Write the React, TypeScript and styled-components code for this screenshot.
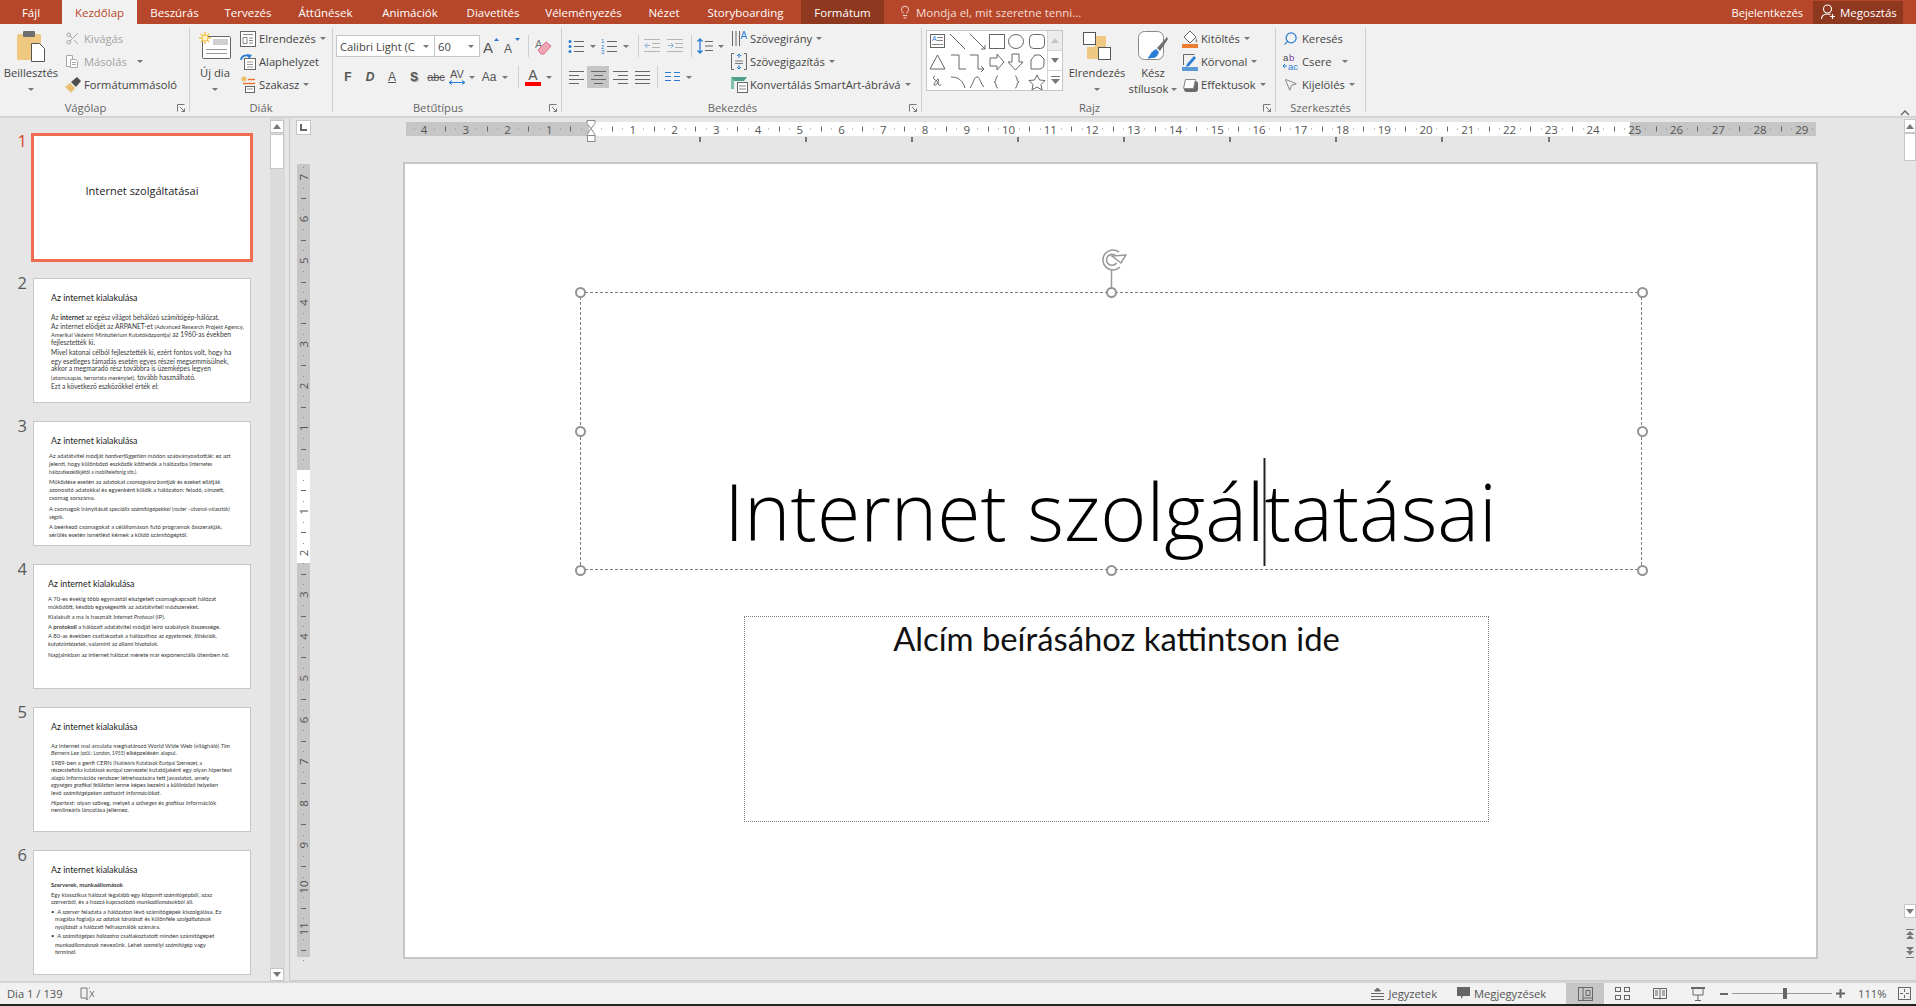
import React from "react";
import styled, { createGlobalStyle } from "styled-components";
import { Lightbulb, Scissors, Search, MousePointer2 } from "lucide-react";

const UI = `"Open Sans", "Noto Sans", sans-serif`;
const SLIDE = `Lato, "Open Sans", sans-serif`;

const Global = createGlobalStyle`
  html, body { margin: 0; padding: 0; background: #e6e6e6; }
  * { box-sizing: border-box; }
`;

const Page = styled.div`
  width: 1916px;
  height: 1006px;
  overflow: hidden;
  display: flex;
  flex-direction: column;
  font-family: ${UI};
  font-size: 11.2px;
  color: #444;
  background: #e6e6e6;
`;

/* ---- title tabs ---- */
const TabBar = styled.div`
  height: 24px;
  flex: none;
  display: flex;
  background: #b7472a;
  color: #fff;
  font-size: 11.5px;
`;
const Tab = styled.div<{ $w: number; $active?: boolean; $dark?: boolean }>`
  width: ${(p) => p.$w}px;
  display: flex;
  align-items: center;
  justify-content: center;
  white-space: nowrap;
  background: ${(p) => (p.$active ? "#f1f1f1" : p.$dark ? "#8f3820" : "transparent")};
  color: ${(p) => (p.$active ? "#b7472a" : "#fff")};
`;
const TabGap = styled.div`
  width: 4px;
`;
const TellMe = styled.div`
  display: flex;
  align-items: center;
  gap: 4px;
  margin-left: 14px;
  color: #f5ddd6;
`;
const TabRight = styled.div`
  margin-left: auto;
  display: flex;
  align-items: center;
  margin-right: 13px;
  font-size: 11.2px;
`;
const Share = styled.div`
  width: 90px;
  height: 23px;
  margin-left: 10px;
  background: #8f3820;
  display: flex;
  align-items: center;
  gap: 4px;
  padding-left: 8px;
  white-space: nowrap;
  font-size: 11.5px;
`;

/* ---- ribbon ---- */
const Ribbon = styled.div`
  height: 94px;
  flex: none;
  display: flex;
  background: #f1f1f1;
  border-bottom: 2px solid #d4d4d4;
`;
const Group = styled.div<{ $w: number }>`
  width: ${(p) => p.$w}px;
  height: 84px;
  margin-top: 4px;
  flex: none;
  display: flex;
  flex-direction: column;
  border-right: 1px solid #cfcfcf;
`;
const GroupBody = styled.div<{ $pl?: number }>`
  height: 70px;
  margin-top: -1px;
  display: flex;
  padding-left: ${(p) => p.$pl ?? 0}px;
`;
const GroupFoot = styled.div<{ $dlg?: boolean }>`
  height: 15px;
  line-height: 22px;
  position: relative;
  text-align: center;
  color: #666;
  padding-right: ${(p) => (p.$dlg ? 18 : 0)}px;
`;
const Expander = styled.svg`
  position: absolute;
  right: 3px;
  top: 7px;
`;
const Collapse = styled.svg`
  margin-left: auto;
  margin-right: 6px;
  margin-top: 86px;
`;
const Big = styled.div<{ $w: number; $ml?: number }>`
  width: ${(p) => p.$w}px;
  margin-left: ${(p) => p.$ml ?? 0}px;
  flex: none;
  display: flex;
  flex-direction: column;
  align-items: center;
  line-height: 16px;
  white-space: nowrap;
`;
const BigIcon = styled.div`
  height: 39px;
  display: flex;
  align-items: center;
  justify-content: center;
`;
const BigLabel = styled.div`
  height: 16px;
  display: flex;
  align-items: center;
  gap: 3px;
`;
const Stack = styled.div<{ $ml?: number }>`
  display: flex;
  flex-direction: column;
  margin-left: ${(p) => p.$ml ?? 0}px;
  flex: none;
`;
const Item = styled.div<{ $off?: boolean }>`
  height: 23px;
  display: flex;
  align-items: center;
  white-space: nowrap;
  color: ${(p) => (p.$off ? "#a3a3a3" : "#444")};
`;
const ItemIcon = styled.span`
  width: 19px;
  height: 18px;
  flex: none;
  display: flex;
  align-items: center;
`;
const Drop = styled.span<{ $m?: number }>`
  display: inline-block;
  width: 0;
  height: 0;
  margin-left: ${(p) => p.$m ?? 4}px;
  border-left: 3px solid transparent;
  border-right: 3px solid transparent;
  border-top: 3px solid #777;
`;
const ToolRows = styled.div`
  display: flex;
  flex-direction: column;
  gap: 9px;
  padding-top: 8px;
  flex: none;
`;
const ToolRow = styled.div`
  height: 22px;
  display: flex;
`;
const Cell = styled.div<{ $w: number; $on?: boolean }>`
  width: ${(p) => p.$w}px;
  height: 22px;
  flex: none;
  display: flex;
  align-items: center;
  justify-content: center;
  background: ${(p) => (p.$on ? "#c6c6c6" : "transparent")};
`;
const Rule = styled.div`
  width: 1px;
  height: 22px;
  background: #cfcfcf;
`;
const Combo = styled.div<{ $w: number }>`
  width: ${(p) => p.$w}px;
  height: 22px;
  flex: none;
  background: #fff;
  border: 1px solid #c6c6c6;
  margin-left: -1px;
  display: flex;
  align-items: center;
  justify-content: space-between;
  padding: 0 5px 0 3px;
  white-space: nowrap;
  overflow: hidden;
`;
const Glyph = styled.span<{ $b?: boolean; $i?: boolean; $u?: boolean; $s?: boolean; $size?: number; $shadow?: boolean }>`
  font-family: "Liberation Sans", sans-serif;
  font-size: ${(p) => p.$size ?? 12}px;
  line-height: ${(p) => p.$size ?? 12}px;
  font-weight: ${(p) => (p.$b ? 700 : 400)};
  font-style: ${(p) => (p.$i ? "italic" : "normal")};
  text-decoration: ${(p) => (p.$u ? "underline" : p.$s ? "line-through" : "none")};
  text-shadow: ${(p) => (p.$shadow ? "1px 1px 1px #999" : "none")};
  color: #555;
`;
const GlyphStack = styled.span`
  display: flex;
  flex-direction: column;
  align-items: center;
`;
const Gallery = styled.div`
  width: 137px;
  height: 61px;
  margin-top: 3px;
  flex: none;
  background: #fff;
  border: 1px solid #c6c6c6;
  display: flex;
`;
const GalleryScroll = styled.div`
  margin-left: auto;
  width: 15px;
  display: flex;
  flex-direction: column;
  border-left: 1px solid #d6d6d6;
`;
const ScrollCell = styled.div<{ $off?: boolean }>`
  flex: 1;
  display: flex;
  align-items: center;
  justify-content: center;
  background: ${(p) => (p.$off ? "#ececec" : "#fff")};
  border-bottom: 1px solid #d6d6d6;
  &:last-child { border-bottom: 0; }
`;

/* ---- workspace ---- */
const Workspace = styled.div`
  height: 863px;
  flex: none;
  display: flex;
`;
const ThumbPanel = styled.div`
  width: 270px;
  flex: none;
  padding-top: 17px;
  overflow: hidden;
`;
const ThumbRow = styled.div`
  height: 143px;
  display: flex;
`;
const ThumbNum = styled.div<{ $on?: boolean }>`
  width: 33px;
  height: 16px;
  margin-top: ${(p) => (p.$on ? -2 : -3)}px;
  flex: none;
  padding-right: 6px;
  text-align: right;
  font-size: 16.5px;
  line-height: 16px;
  color: ${(p) => (p.$on ? "#d24726" : "#5a5a5a")};
`;
const Thumb = styled.div<{ $on?: boolean; $pl?: number; $fs?: number }>`
  width: 218px;
  height: 125px;
  background: #fff;
  border: 1px solid ${(p) => (p.$on ? "#ef6c4f" : "#c6c6c6")};
  box-shadow: ${(p) => (p.$on ? "0 0 0 2px #ef6c4f" : "none")};
  font-family: ${SLIDE};
  font-size: ${(p) => p.$fs ?? 12}px;
  color: #3a3a3a;
  padding-left: ${(p) => p.$pl ?? 17}px;
  overflow: hidden;
`;
const ThumbCover = styled(Thumb)`
  display: flex;
  align-items: center;
  justify-content: center;
  padding: 0 0 14px;
  font-family: ${UI};
  font-size: 11px;
  color: #222;
  transform-origin: center;
`;
const ThumbTitle = styled.div<{ $pl?: number; $mb: number }>`
  margin-top: 13px;
  margin-bottom: ${(p) => p.$mb}px;
  padding-left: ${(p) => p.$pl ?? 0}px;
  height: 12px;
  line-height: 12px;
  font-size: 8.8px;
  color: #222;
  white-space: nowrap;
`;
const Line = styled.div<{ $h: number; $in?: number }>`
  height: ${(p) => p.$h}px;
  line-height: 8px;
  margin-left: ${(p) => p.$in ?? 0}px;
  white-space: nowrap;
`;
const Tiny = styled.span`
  font-size: 0.84em;
`;
const VBar = styled.div`
  width: 15px;
  flex: none;
  background: #dbdbdb;
  display: flex;
  flex-direction: column;
  padding-top: 2px;
`;
const VBtn = styled.div`
  width: 14px;
  height: 13px;
  flex: none;
  background: #fff;
  border: 1px solid #c6c6c6;
  display: flex;
  align-items: center;
  justify-content: center;
`;
const VThumb = styled.div<{ $h: number }>`
  width: 14px;
  height: ${(p) => p.$h}px;
  flex: none;
  margin-top: 1px;
  background: #fff;
  border: 1px solid #c6c6c6;
`;
const VSpace = styled.div`
  flex: 1;
`;
const Editor = styled.div`
  margin-left: 4px;
  flex: 1;
  min-width: 0;
  height: 863px;
  border-left: 1px solid #cbcbcb;
  border-bottom: 1px solid #cbcbcb;
  display: flex;
`;
const EditorMain = styled.div`
  flex: 1;
  min-width: 0;
  display: flex;
  flex-direction: column;
`;
const RulerTop = styled.div`
  height: 44px;
  flex: none;
  display: flex;
  padding: 2px 0 0 6px;
`;
const TabStopBtn = styled.div`
  width: 15px;
  height: 15px;
  flex: none;
  background: #fff;
  border: 1px solid #c6c6c6;
  display: flex;
  align-items: center;
  justify-content: center;
`;
const HRuler = styled.svg`
  margin-left: 95px;
  flex: none;
`;
const EditorBody = styled.div`
  display: flex;
  padding-left: 7px;
`;
const VRuler = styled.svg`
  margin-top: 2px;
  flex: none;
  overflow: visible;
`;
const Canvas = styled.div`
  position: relative;
  width: 1415px;
  height: 797px;
  margin-left: 93px;
  flex: none;
  background: #fff;
  border: 2px solid #c6c6c6;
`;
const dash = (on: number, off: number) => {
  const c = `#7d7d7d 0 ${on}px, transparent ${on}px ${on + off}px`;
  return `
    background-image:
      repeating-linear-gradient(90deg, ${c}),
      repeating-linear-gradient(90deg, ${c}),
      repeating-linear-gradient(0deg, ${c}),
      repeating-linear-gradient(0deg, ${c});
    background-size: 100% 1px, 100% 1px, 1px 100%, 1px 100%;
    background-position: 0 0, 0 100%, 0 0, 100% 0;
    background-repeat: no-repeat;
  `;
};
const TitleBox = styled.div`
  position: absolute;
  left: 175px;
  top: 128px;
  width: 1062px;
  height: 278px;
  ${dash(3, 2)}
  display: flex;
  align-items: flex-end;
  justify-content: center;
  padding-bottom: 10px;
  font-family: ${UI};
  font-weight: 300;
  font-size: 80px;
  line-height: 100px;
  color: #000;
  white-space: nowrap;
`;
const TitleText = styled.span`
  display: inline-block;
  transform: scaleX(0.984);
`;
const TextCaret = styled.span`
  position: relative;
  display: inline-block;
  width: 0;
  height: 0;
  &::after {
    content: "";
    position: absolute;
    left: -1px;
    top: -83px;
    width: 2px;
    height: 108px;
    background: #222;
  }
`;
const Handle = styled.div<{ $x: number; $y: number }>`
  position: absolute;
  left: calc(${(p) => p.$x}% - 5.5px);
  top: calc(${(p) => p.$y}% - 5.5px);
  width: 11px;
  height: 11px;
  border-radius: 50%;
  background: #fff;
  border: 2px solid #939393;
`;
const RotateHandle = styled.svg`
  position: absolute;
  left: 519px;
  top: -44px;
`;
const SubBox = styled.div`
  position: absolute;
  left: 339px;
  top: 452px;
  width: 745px;
  height: 206px;
  ${dash(1, 1)}
  padding-top: 2px;
  text-align: center;
  font-family: ${SLIDE};
  font-size: 32.8px;
  line-height: 42px;
  color: #111;
`;
const RightBar = styled.div`
  width: 12px;
  flex: none;
  display: flex;
  flex-direction: column;
  align-items: center;
  padding-top: 1px;
`;
const RBtn = styled(VBtn)`
  width: 12px;
  height: 14px;
`;
const RThumb = styled(VThumb)`
  width: 12px;
  margin-top: 0;
`;
const RNav = styled.div<{ $mt?: number; $mb?: number }>`
  height: 18px;
  flex: none;
  display: flex;
  align-items: center;
  margin-top: ${(p) => p.$mt ?? 0}px;
  margin-bottom: ${(p) => p.$mb ?? 0}px;
`;

/* ---- status ---- */
const Status = styled.div`
  height: 23px;
  flex: none;
  display: flex;
  align-items: center;
  background: #f1f1f1;
  border-top: 2px solid #d4d4d4;
  color: #555;
`;
const StatusText = styled.div`
  padding-left: 7px;
  width: 80px;
  white-space: nowrap;
`;
const StatusRight = styled.div`
  margin-left: auto;
  display: flex;
  align-items: center;
  height: 100%;
`;
const StatusBtn = styled.div`
  display: flex;
  align-items: center;
  gap: 4px;
  margin-right: 20px;
  white-space: nowrap;
`;
const ViewBtn = styled.div<{ $on?: boolean }>`
  width: 37.7px;
  height: 100%;
  display: flex;
  align-items: center;
  justify-content: center;
  background: ${(p) => (p.$on ? "#c6c6c6" : "transparent")};
`;
const ZoomMinus = styled.svg`
  margin-left: 3px;
`;
const Slider = styled.div`
  position: relative;
  width: 100px;
  height: 1px;
  background: #9a9a9a;
  margin: 0 4px;
`;
const SliderKnob = styled.div`
  position: absolute;
  left: 51px;
  top: -5px;
  width: 4px;
  height: 11px;
  background: #666;
`;
const ZoomText = styled.div`
  width: 26px;
  margin-left: 13px;
  margin-right: 14px;
`;
const FitIcon = styled.svg`
  margin-right: 5px;
`;
const EndLine = styled.div`
  height: 2px;
  flex: none;
  background: #222;
`;

/* ---- icons ---- */
const BLUE = "#2b7cd3";

function Corner() {
  return (
    <Expander width="9" height="9" viewBox="0 0 9 9" fill="none" stroke="#777">
      <path d="M.5 7.5v-7h7" />
      <path d="M3 3l4.5 4.5M7.5 4.5v3h-3" />
    </Expander>
  );
}
function PasteIcon() {
  return (
    <svg width="29" height="31" viewBox="0 0 29 31">
      <rect x="0" y="3" width="24" height="26" rx="1.500" fill="#efc982" />
      <rect x="6" y="0" width="12" height="6" rx="1" fill="#6f6f6f" />
      <path d="M14.500 12.500h8l5 5v13h-13z" fill="#fff" stroke="#555" />
    </svg>
  );
}
function CopyIcon() {
  return (
    <svg width="15" height="15" viewBox="0 0 15 15" fill="#fff" stroke="#a8a8a8">
      <path d="M1.500 1.500h6v11h-6z" />
      <path d="M5.500 5.500h5l2 2v6h-7z" />
      <path d="M7 8.500h4M7 10.500h4" />
    </svg>
  );
}
function BrushIcon() {
  return (
    <svg width="16" height="16" viewBox="0 0 16 16">
      <path d="M0 10l5-4 5 5-4 5c-1-2-4-4-6-6z" fill="#e9bf72" />
      <path d="M6 5l6-5 4 4-5 6z" fill="#4f4f4f" />
    </svg>
  );
}
function NewSlideIcon() {
  return (
    <svg width="32" height="28" viewBox="0 0 32 28">
      <rect x="3.500" y="4.500" width="28" height="22" rx="1" fill="#fff" stroke="#666" />
      <rect x="14" y="7" width="15" height="6" fill="#cfcfcf" />
      <path d="M7 17.500h21M7 21.500h21" stroke="#999" />
      <path d="M6 0v12M0 6h12M2 2l8 8M10 2l-8 8" stroke="#f2c14e" strokeWidth="1.500" />
      <circle cx="6" cy="6" r="3" fill="#fff3c4" stroke="#f2c14e" />
    </svg>
  );
}
function LayoutIcon() {
  return (
    <svg width="16" height="16" viewBox="0 0 16 16" fill="#fff" stroke="#666">
      <rect x=".5" y=".5" width="15" height="15" />
      <path d="M3 3.500h10M3 6.500h4v6H3zM9 7h4M9 9.500h4M9 12h4" fill="none" stroke="#888" />
    </svg>
  );
}
function ResetIcon() {
  return (
    <svg width="16" height="16" viewBox="0 0 16 16">
      <rect x="4.500" y="4.500" width="11" height="11" fill="#fff" stroke="#666" />
      <path d="M7 8h6M7 10.500h6M7 13h6" stroke="#999" />
      <path d="M1 6a5 5 0 0 1 8-3.500" fill="none" stroke={BLUE} strokeWidth="1.800" />
      <path d="M7 0l5 1-3 4z" fill={BLUE} />
    </svg>
  );
}
function SectionIcon() {
  return (
    <svg width="16" height="17" viewBox="0 0 16 17">
      <path d="M4 0v6M1 3h6M2 1l4 4M6 1L2 5" stroke="#f0b040" />
      <path d="M8 3.500h7" stroke="#e8702a" strokeWidth="1.400" />
      <path d="M3 7.500h12" stroke="#e8702a" strokeWidth="1.400" />
      <rect x="5.500" y="10.500" width="9" height="6" fill="#fff" stroke="#666" />
      <path d="M7 13h6" stroke="#999" />
    </svg>
  );
}
function GrowIcon({ up }: { up?: boolean }) {
  return (
    <svg width="17" height="18" viewBox="0 0 17 18">
      <text x="0" y="16" fontFamily="Liberation Sans" fontSize={up ? 15 : 12} fill="#555">A</text>
      <path d={up ? "M11 4l2.500-3L16 4z" : "M11 1l2.500 3L16 1z"} fill={BLUE} />
    </svg>
  );
}
function EraserIcon() {
  return (
    <svg width="18" height="18" viewBox="0 0 18 18">
      <text x="0" y="11" fontFamily="Liberation Sans" fontSize="11" fill="#777">A</text>
      <path d="M3 13l8-8 5 4-7 8H6z" fill="#f1a7b5" stroke="#d9708a" />
    </svg>
  );
}
function SpacingGlyph() {
  return (
    <GlyphStack>
      <Glyph $size={11}>AV</Glyph>
      <svg width="16" height="5" viewBox="0 0 16 5"><path d="M0 2.500h16M3 .5L0 2.500l3 2M13 .5l3 2-3 2" fill="none" stroke={BLUE} /></svg>
    </GlyphStack>
  );
}
function ColorA() {
  return (
    <GlyphStack>
      <Glyph $size={14}>A</Glyph>
      <svg width="16" height="4"><rect width="16" height="4" fill="#f00" /></svg>
    </GlyphStack>
  );
}
function BulletsIcon({ num }: { num?: boolean }) {
  return (
    <svg width="16" height="16" viewBox="0 0 16 16" stroke="#666">
      <path d="M6 3.500h10M6 8.500h10M6 13.500h10" />
      {num ? (
        <g fill={BLUE} stroke="none" fontSize="6" fontFamily="Liberation Sans">
          <text x="0" y="5">1</text><text x="0" y="10.500">2</text><text x="0" y="16">3</text>
        </g>
      ) : (
        <g fill={BLUE} stroke="none">
          <circle cx="2" cy="3.500" r="1.500" /><circle cx="2" cy="8.500" r="1.500" /><circle cx="2" cy="13.500" r="1.500" />
        </g>
      )}
    </svg>
  );
}
function IndentIcon({ more }: { more?: boolean }) {
  return (
    <svg width="16" height="14" viewBox="0 0 16 14" stroke="#b5b5b5">
      <path d="M0 .5h16M8 4.500h8M8 8.500h8M0 12.500h16" />
      <path d={more ? "M1 6.500h5M4 4l2.500 2.500L4 9" : "M6 6.500H1M3.500 4L1 6.500 3.500 9"} fill="none" stroke="#8db4dc" />
    </svg>
  );
}
function LineSpacingIcon() {
  return (
    <svg width="16" height="16" viewBox="0 0 16 16">
      <path d="M3 1v14M.5 3.500L3 1l2.500 2.500M.5 12.500L3 15l2.500-2.500" fill="none" stroke={BLUE} strokeWidth="1.300" />
      <path d="M8 3.500h8M8 8h8M8 12.500h8" stroke="#666" />
    </svg>
  );
}
function AlignIcon({ kind }: { kind: "l" | "c" | "r" | "j" }) {
  const s = kind === "l" ? ["M0 1.500h15", "M0 5.500h10", "M0 9.500h15", "M0 13.500h10"]
    : kind === "c" ? ["M0 1.500h15", "M3 5.500h9", "M0 9.500h15", "M3 13.500h9"]
    : kind === "r" ? ["M0 1.500h15", "M5 5.500h10", "M0 9.500h15", "M5 13.500h10"]
    : ["M0 1.500h15", "M0 5.500h15", "M0 9.500h15", "M0 13.500h15"];
  return (
    <svg width="15" height="15" viewBox="0 0 15 15" stroke="#666">
      {s.map((d) => <path key={d} d={d} />)}
    </svg>
  );
}
function ColumnsIcon() {
  return (
    <svg width="15" height="14" viewBox="0 0 15 14" stroke={BLUE}>
      <path d="M0 2.500h6M9 2.500h6M0 6.500h6M9 6.500h6M0 10.500h6M9 10.500h6" />
    </svg>
  );
}
function TextDirIcon() {
  return (
    <svg width="16" height="18" viewBox="0 0 16 18" stroke="#666">
      <path d="M1.500 1v15M5 1v15M8.500 1v15" />
      <text x="9.500" y="9" fontSize="10" fontFamily="Liberation Sans" fill={BLUE} stroke="none">A</text>
    </svg>
  );
}
function TextAlignIcon() {
  return (
    <svg width="16" height="17" viewBox="0 0 16 17" fill="none">
      <path d="M3 .5H.5v16H3M13 .5h2.500v16H13" stroke="#666" />
      <path d="M4 8h8M4 10.500h8" stroke="#777" />
      <path d="M8 1v4M6 3l2-2 2 2M8 12v4M6 14l2 2 2-2" stroke={BLUE} />
    </svg>
  );
}
function SmartArtIcon() {
  return (
    <svg width="17" height="17" viewBox="0 0 17 17">
      <path d="M0 1h16l-3 4H3z" fill="#4ea08a" />
      <path d="M0 1l3 4v8H0z" fill="#7cc0ad" />
      <rect x="6.500" y="6.500" width="10" height="10" fill="#fff" stroke="#666" />
      <path d="M8 10h7M8 13h7" stroke="#888" />
    </svg>
  );
}
function ArrangeIcon() {
  return (
    <svg width="28" height="28" viewBox="0 0 28 28">
      <rect x="12" y="4" width="11" height="12" fill="#efc982" />
      <rect x="4" y="15" width="12" height="12" fill="#efc982" />
      <rect x=".5" y=".5" width="12" height="12" fill="#fff" stroke="#555" />
      <rect x="15.500" y="15.500" width="12" height="12" fill="#fff" stroke="#555" />
    </svg>
  );
}
function StylesIcon() {
  return (
    <svg width="30" height="30" viewBox="0 0 30 30">
      <rect x=".5" y=".5" width="25" height="28" rx="6" fill="#fff" stroke="#8a8a8a" />
      <path d="M12 24c1-3 3-4 6-6l3 3c-1 3-3 6-6 6-2 0-4 0-5 1 0-2 1-3 2-4z" fill={BLUE} />
      <path d="M19 17l10-11 1 2-8 12z" fill="#6f6f6f" />
    </svg>
  );
}
function FillIcon() {
  return (
    <svg width="17" height="18" viewBox="0 0 17 18">
      <path d="M8 1l6 6-6 6-6-6z" fill="#fff" stroke="#666" />
      <path d="M14 8c1 2 2 3 1 4s-2 0-1-4" fill="#888" />
      <rect y="14" width="16" height="4" fill="#ed7d31" />
    </svg>
  );
}
function OutlineIcon() {
  return (
    <svg width="17" height="18" viewBox="0 0 17 18">
      <path d="M1.500 12V1.500h11" fill="none" stroke="#666" />
      <path d="M5 11l7-8 2 2-7 8-3 1z" fill={BLUE} />
      <rect y="14" width="16" height="4" fill="#5b9bd5" />
    </svg>
  );
}
function EffectIcon() {
  return (
    <svg width="17" height="16" viewBox="0 0 17 16">
      <rect x="2" y="4" width="14" height="11" rx="3" fill="#6a6a6a" />
      <path d="M3.500 2.500h10l-2 9h-10z" fill="#fff" stroke="#888" strokeLinejoin="round" />
    </svg>
  );
}
function ReplaceIcon() {
  return (
    <svg width="16" height="18" viewBox="0 0 16 18" fontFamily="Liberation Sans" fontSize="9.500">
      <text x="0" y="8" fill="#444">a</text>
      <text x="6" y="8" fill="#7c3fa6">b</text>
      <text x="5" y="17" fill={BLUE}>ac</text>
      <path d="M0 13h4M2 11l-2 2 2 2" fill="none" stroke={BLUE} />
    </svg>
  );
}
function PersonPlus() {
  return (
    <svg width="15" height="16" viewBox="0 0 15 16" fill="none" stroke="#fff" strokeWidth="1.100">
      <circle cx="6.500" cy="5" r="4" />
      <path d="M.5 15c0-3 2-5 6-5 1 0 2 .2 3 .6" />
      <path d="M11.500 10v5M9 12.500h5" />
    </svg>
  );
}
function ShapeGallery() {
  return (
    <svg width="119" height="59" viewBox="0 0 119 59" fill="none" stroke="#666">
      <rect x="3.500" y="3.500" width="14" height="13" />
      <text x="5" y="10" fontSize="7" fill={BLUE} stroke="none" fontFamily="Liberation Sans">A</text>
      <path d="M10 6.500h6M10 9.500h6M5 13.500h11" stroke="#888" />
      <path d="M23 3l15 15M43 3l15 15M58 18v-4M58 18h-4" />
      <rect x="62.500" y="3.500" width="15" height="14" />
      <ellipse cx="89" cy="10.500" rx="7.500" ry="7" />
      <rect x="102.500" y="3.500" width="15" height="14" rx="4" />
      <path d="M3 38l7.500-14 7.500 14zM24 24h8v14h7" />
      <path d="M43 24h8v14h6M54 35l3 3-3 3" />
      <path d="M63 27h7v-4l7 8-7 8v-4h-7z" />
      <path d="M85 23h7v8h4l-7.500 8-7.500-8h4z" />
      <path d="M108 24h5l4 4v5c0 3-2 5-5 5h-8V29z" />
      <path d="M8 45c-6 3 6 5 2 8s-4 0 0-4-2 7 4 5" />
      <path d="M24 46c8 0 12 4 14 11" />
      <path d="M43 57c4-6 4-11 7-11s4 8 7 10" />
      <path d="M71 45c-3 0-1 6-4 6 3 0 1 6 4 6M88 45c3 0 1 6 4 6-3 0-1 6-4 6" />
      <path d="M110 44l2.500 5 5.500.5-4 4 1 5.500-5-3-5 3 1-5.500-4-4 5.500-.5z" />
    </svg>
  );
}
function UpTri({ off }: { off?: boolean }) {
  return <svg width="8" height="5"><path d="M0 5l4-5 4 5z" fill={off ? "#c4c4c4" : "#777"} /></svg>;
}
function DownTri() {
  return <svg width="8" height="5"><path d="M0 0l4 5 4-5z" fill="#777" /></svg>;
}
function DoubleTri({ up }: { up?: boolean }) {
  return (
    <svg width="10" height="11" viewBox="0 0 10 11" fill="#777">
      {up ? <path d="M1 0h8v1H1zM5 2l4 4H1zM5 6l4 4H1z" /> : <path d="M1 0l4 4 4-4zM1 4l4 4 4-4zM1 10h8v1H1z" />}
    </svg>
  );
}
function MoreTri() {
  return (
    <svg width="9" height="9" viewBox="0 0 9 9" fill="#777">
      <path d="M0 0h9v1H0zM0 3l4.500 5L9 3z" />
    </svg>
  );
}

/* ---- rulers ---- */
const CM = 41.75;
const RULE_TEXT = { fontFamily: "Open Sans, sans-serif", fontSize: 11.5, fill: "#555" };

function TopRuler() {
  const o = 185;
  const ticks: React.ReactNode[] = [];
  for (let q = -17; q <= 118; q++) {
    const x = o + (q * CM) / 4;
    if (q % 4 === 0) {
      if (q !== 0) ticks.push(<text key={q} x={x} y={9} textAnchor="middle" dominantBaseline="central" {...RULE_TEXT}>{Math.abs(q / 4)}</text>);
    } else if (q % 2 === 0) {
      ticks.push(<rect key={q} x={Math.round(x)} y={6.5} width={1} height={5} fill="#666" />);
    } else {
      ticks.push(<rect key={q} x={Math.round(x)} y={8.5} width={1} height={1} fill="#8a8a8a" />);
    }
  }
  const stops = [293, 399, 505, 611, 717, 823, 929, 1035, 1142];
  return (
    <HRuler width="1411" height="24" viewBox="0 0 1411 24">
      <rect y="2" width="183" height="14" fill="#c6c6c6" />
      <rect x="183" y="2" width="1041" height="14" fill="#fff" />
      <rect x="1224" y="2" width="186" height="14" fill="#c6c6c6" />
      {ticks}
      {stops.map((x) => <rect key={x} x={x} y="17" width="2" height="5" fill="#777" />)}
      <path d="M181 .5h8v3l-4 5 4 6v1h-8v-1l4-6-4-5z" fill="#fff" stroke="#8a8a8a" />
      <rect x="181.500" y="15.500" width="7.500" height="6" fill="#fff" stroke="#8a8a8a" />
    </HRuler>
  );
}
function SideRuler() {
  const o = 305.5;
  const ticks: React.ReactNode[] = [];
  for (let q = -29; q <= 47; q++) {
    const y = o + (q * CM) / 4;
    if (q % 4 === 0) {
      if (q !== 0) ticks.push(<text key={q} x={6.5} y={y} textAnchor="middle" dominantBaseline="central" transform={`rotate(-90 6.5 ${y})`} {...RULE_TEXT}>{Math.abs(q / 4)}</text>);
    } else if (q % 2 === 0) {
      ticks.push(<rect key={q} x={4} y={Math.round(y)} width={5} height={1} fill="#666" />);
    } else {
      ticks.push(<rect key={q} x={6} y={Math.round(y)} width={1} height={1} fill="#8a8a8a" />);
    }
  }
  return (
    <VRuler width="13" height="793" viewBox="0 0 13 793">
      <rect width="13" height="793" fill="#c6c6c6" />
      <rect y="306" width="13" height="93" fill="#fff" />
      {ticks}
    </VRuler>
  );
}

/* ---- slide data ---- */
type Row = { h: number; in?: number; t: React.ReactNode };
type Slide = { gap: number; pl: number; fs: number; tpl?: number; rows: Row[] };

const slides: Slide[] = [
  {
    gap: 8.5, pl: 17, fs: 6.7,
    rows: [
      { h: 9.5, t: <>Az <b>internet</b> az egész világot behálózó számítógép-hálózat.</> },
      { h: 8, t: <>Az internet elődjét az ARPANET-et <Tiny>(Advanced Research Projekt Agency,</Tiny></> },
      { h: 8, t: <><Tiny>Amerikai Védelmi Minisztérium Kutatóközpontja)</Tiny> az 1960-as években</> },
      { h: 9.5, t: "fejlesztették ki." },
      { h: 9, t: "Mivel katonai célból fejlesztették ki, ezért fontos volt, hogy ha" },
      { h: 7, t: "egy esetleges támadás esetén egyes részei megsemmisülnek," },
      { h: 9, t: "akkor a megmaradó rész továbbra is üzemképes legyen" },
      { h: 9, t: <><Tiny>(atomcsapás, terrorista merénylet),</Tiny> tovább használható.</> },
      { h: 8, t: "Ezt a következő eszközökkel érték el:" },
    ],
  },
  {
    gap: 4.7, pl: 15, fs: 5.85, tpl: 2,
    rows: [
      { h: 8.3, t: <>Az adatátvitel módját <i>hardverfüggetlen</i> módon szabványosították: ez azt</> },
      { h: 8.2, t: <>jelenti, hogy különböző eszközök köthetők a hálózatba <Tiny>(internetes</Tiny></> },
      { h: 10, t: <Tiny>hálózatkezelőkjétől a mobiltelefonig stb.).</Tiny> },
      { h: 8, t: <>Működése esetén az adatokat <i>csomagokra bontják</i> és ezeket ellátják</> },
      { h: 8, t: "azonosító adatokkal és egyenként küldik a hálózaton: feladó, címzett," },
      { h: 11, t: "csomag sorszáma." },
      { h: 8, t: <>A csomagok irányítását <i>speciális számítógépekkel</i> <Tiny>(router –útvonal-választók)</Tiny></> },
      { h: 10, t: <Tiny>végzik.</Tiny> },
      { h: 8, t: "A beérkező csomagokat a célállomáson futó programok összerakják," },
      { h: 8, t: "sérülés esetén ismétlést kérnek a küldő számítógéptől." },
    ],
  },
  {
    gap: 5, pl: 14, fs: 5.85,
    rows: [
      { h: 7.5, t: "A 70-es évekig több egymástól elszigetelt csomagkapcsolt hálózat" },
      { h: 10, t: "működött, később egységesítik az adatátviteli módszereket." },
      { h: 10, t: <>Kialakult a ma is használt <i>Internet Protocol</i> (IP).</> },
      { h: 9, t: <>A <b>protokoll</b> a hálózati adatátvitel módját leíró szabályok összessége.</> },
      { h: 8, t: <>A 80-as években csatlakoztak a hálózathoz az <i>egyetemek, főiskolák,</i></> },
      { h: 11, t: <><i>kutatóintézetek</i>, valamint az <i>állami hivatalok</i>.</> },
      { h: 8, t: "Napjainkban az internet hálózat mérete már exponenciális ütemben nő." },
    ],
  },
  {
    gap: 9, pl: 17, fs: 5.85,
    rows: [
      { h: 7, t: <>Az internet mai arculata meghatározó World Wide Web (világháló) <i>Tim</i></> },
      { h: 10, t: <><i>Berners Lee</i> <Tiny>(szül.: London, 1955)</Tiny> elképzelésén alapul.</> },
      { h: 7, t: <>1989-ben a genfi CERN <Tiny>(Nukleáris Kutatások Európai Szervezet, a</Tiny></> },
      { h: 8, t: <><Tiny>részecskefizika kutatások európai szervezete)</Tiny> kutatójaként egy olyan hipertext</> },
      { h: 7, t: "alapú információs rendszer létrehozására tett javaslatot, amely" },
      { h: 8, t: <><i>egységes grafikai felületen</i> lenne képes kezelni a <i>különböző helyeken</i></> },
      { h: 10, t: <>levő <i>számítógépeken szétszórt információkat</i>.</> },
      { h: 7, t: <><i>Hipertext:</i> olyan szöveg, melyet a <i>szöveges</i> és <i>grafikus</i> információk</> },
      { h: 8, t: "nemlineáris láncolása jellemez." },
    ],
  },
  {
    gap: 5, pl: 17, fs: 5.85,
    rows: [
      { h: 10, t: <b>Szerverek, munkaállomások</b> },
      { h: 7, t: <>Egy klasszikus hálózat legalább egy <i>központi számítógépből</i>, azaz</> },
      { h: 10, t: <><i>szerverből</i>, és a hozzá kapcsolódó <i>munkaállomásokból</i> áll.</> },
      { h: 7, t: <>•&nbsp;&nbsp;A <i>szerver</i> feladata a hálózaton lévő számítógépek kiszolgálása. Ez</> },
      { h: 8, in: 4, t: <>magába foglalja az <i>adatok tárolását</i> és különféle <i>szolgáltatások</i></> },
      { h: 9, in: 4, t: <><i>nyújtását</i> a hálózati felhasználók számára.</> },
      { h: 9, t: <>•&nbsp;&nbsp;A <i>számítógépes hálózatra</i> csatlakoztatott minden számítógépet</> },
      { h: 7, in: 4, t: <><i>munkaállomásnak</i> nevezünk. Lehet <i>személyi számítógép</i> vagy</> },
      { h: 8, in: 4, t: <><i>terminál</i>.</> },
    ],
  },
];

export default function App() {
  return (
    <Page>
      <Global />
      <TabBar>
        <Tab $w={62}>Fájl</Tab>
        <Tab $w={75} $active>Kezdőlap</Tab>
        <Tab $w={75}>Beszúrás</Tab>
        <Tab $w={72}>Tervezés</Tab>
        <Tab $w={83}>Áttűnések</Tab>
        <Tab $w={86}>Animációk</Tab>
        <Tab $w={80}>Diavetítés</Tab>
        <Tab $w={101}>Véleményezés</Tab>
        <Tab $w={60}>Nézet</Tab>
        <Tab $w={103}>Storyboarding</Tab>
        <TabGap />
        <Tab $w={83} $dark>Formátum</Tab>
        <TellMe>
          <Lightbulb size={14} strokeWidth={1.3} color="#fff" />
          Mondja el, mit szeretne tenni...
        </TellMe>
        <TabRight>
          Bejelentkezés
          <Share><PersonPlus />Megosztás</Share>
        </TabRight>
      </TabBar>

      <Ribbon>
        <Group $w={190}>
          <GroupBody>
            <Big $w={62}>
              <BigIcon><PasteIcon /></BigIcon>
              <BigLabel>Beillesztés</BigLabel>
              <BigLabel><Drop $m={0} /></BigLabel>
            </Big>
            <Stack $ml={3}>
              <Item $off><ItemIcon><Scissors size={15} color="#a8a8a8" strokeWidth={1.6} /></ItemIcon>Kivágás</Item>
              <Item $off><ItemIcon><CopyIcon /></ItemIcon>Másolás<Drop $m={10} /></Item>
              <Item><ItemIcon><BrushIcon /></ItemIcon>Formátummásoló</Item>
            </Stack>
          </GroupBody>
          <GroupFoot $dlg>Vágólap<Corner /></GroupFoot>
        </Group>

        <Group $w={143}>
          <GroupBody>
            <Big $w={50}>
              <BigIcon><NewSlideIcon /></BigIcon>
              <BigLabel>Új dia</BigLabel>
              <BigLabel><Drop $m={0} /></BigLabel>
            </Big>
            <Stack>
              <Item><ItemIcon><LayoutIcon /></ItemIcon>Elrendezés<Drop /></Item>
              <Item><ItemIcon><ResetIcon /></ItemIcon>Alaphelyzet</Item>
              <Item><ItemIcon><SectionIcon /></ItemIcon>Szakasz<Drop /></Item>
            </Stack>
          </GroupBody>
          <GroupFoot>Diák</GroupFoot>
        </Group>

        <Group $w={229}>
          <GroupBody $pl={4}>
            <ToolRows>
              <ToolRow>
                <Combo $w={99}>Calibri Light (C<Drop /></Combo>
                <Combo $w={46}>60<Drop /></Combo>
                <Cell $w={22}><GrowIcon up /></Cell>
                <Cell $w={20}><GrowIcon /></Cell>
                <Cell $w={12}><Rule /></Cell>
                <Cell $w={20}><EraserIcon /></Cell>
              </ToolRow>
              <ToolRow>
                <Cell $w={22}><Glyph $b>F</Glyph></Cell>
                <Cell $w={22}><Glyph $b $i>D</Glyph></Cell>
                <Cell $w={22}><Glyph $u>A</Glyph></Cell>
                <Cell $w={22}><Glyph $b $shadow>S</Glyph></Cell>
                <Cell $w={22}><Glyph $s $size={11}>abc</Glyph></Cell>
                <Cell $w={20}><SpacingGlyph /></Cell>
                <Cell $w={10}><Drop $m={0} /></Cell>
                <Cell $w={24}><Glyph>Aa</Glyph></Cell>
                <Cell $w={8}><Drop $m={0} /></Cell>
                <Cell $w={18}><Rule /></Cell>
                <Cell $w={12}><ColorA /></Cell>
                <Cell $w={20}><Drop $m={0} /></Cell>
              </ToolRow>
            </ToolRows>
          </GroupBody>
          <GroupFoot $dlg>Betűtípus<Corner /></GroupFoot>
        </Group>

        <Group $w={360}>
          <GroupBody $pl={4}>
            <ToolRows>
              <ToolRow>
                <Cell $w={20}><BulletsIcon /></Cell>
                <Cell $w={14}><Drop $m={0} /></Cell>
                <Cell $w={18}><BulletsIcon num /></Cell>
                <Cell $w={16}><Drop $m={0} /></Cell>
                <Cell $w={8}><Rule /></Cell>
                <Cell $w={20}><IndentIcon /></Cell>
                <Cell $w={26}><IndentIcon more /></Cell>
                <Cell $w={6}><Rule /></Cell>
                <Cell $w={22}><LineSpacingIcon /></Cell>
                <Cell $w={10}><Drop $m={0} /></Cell>
              </ToolRow>
              <ToolRow>
                <Cell $w={21}><AlignIcon kind="l" /></Cell>
                <Cell $w={22} $on><AlignIcon kind="c" /></Cell>
                <Cell $w={22}><AlignIcon kind="r" /></Cell>
                <Cell $w={22}><AlignIcon kind="j" /></Cell>
                <Cell $w={8}><Rule /></Cell>
                <Cell $w={23}><ColumnsIcon /></Cell>
                <Cell $w={10}><Drop $m={0} /></Cell>
              </ToolRow>
            </ToolRows>
            <Stack $ml={5}>
              <Item><ItemIcon><TextDirIcon /></ItemIcon>Szövegirány<Drop /></Item>
              <Item><ItemIcon><TextAlignIcon /></ItemIcon>Szövegigazítás<Drop /></Item>
              <Item><ItemIcon><SmartArtIcon /></ItemIcon>Konvertálás SmartArt-ábrává<Drop /></Item>
            </Stack>
          </GroupBody>
          <GroupFoot $dlg>Bekezdés<Corner /></GroupFoot>
        </Group>

        <Group $w={354}>
          <GroupBody $pl={4}>
            <Gallery>
              <ShapeGallery />
              <GalleryScroll>
                <ScrollCell $off><UpTri off /></ScrollCell>
                <ScrollCell><DownTri /></ScrollCell>
                <ScrollCell><MoreTri /></ScrollCell>
              </GalleryScroll>
            </Gallery>
            <Big $w={62} $ml={3}>
              <BigIcon><ArrangeIcon /></BigIcon>
              <BigLabel>Elrendezés</BigLabel>
              <BigLabel><Drop $m={0} /></BigLabel>
            </Big>
            <Big $w={50}>
              <BigIcon><StylesIcon /></BigIcon>
              <BigLabel>Kész</BigLabel>
              <BigLabel>stílusok<Drop $m={0} /></BigLabel>
            </Big>
            <Stack $ml={4}>
              <Item><ItemIcon><FillIcon /></ItemIcon>Kitöltés<Drop /></Item>
              <Item><ItemIcon><OutlineIcon /></ItemIcon>Körvonal<Drop /></Item>
              <Item><ItemIcon><EffectIcon /></ItemIcon>Effektusok<Drop /></Item>
            </Stack>
          </GroupBody>
          <GroupFoot $dlg>Rajz<Corner /></GroupFoot>
        </Group>

        <Group $w={90}>
          <GroupBody $pl={7}>
            <Stack>
              <Item><ItemIcon><Search size={15} color={BLUE} strokeWidth={2} style={{ transform: "scaleX(-1)" }} /></ItemIcon>Keresés</Item>
              <Item><ItemIcon><ReplaceIcon /></ItemIcon>Csere<Drop $m={10} /></Item>
              <Item><ItemIcon><MousePointer2 size={15} color="#666" strokeWidth={1.2} /></ItemIcon>Kijelölés<Drop /></Item>
            </Stack>
          </GroupBody>
          <GroupFoot>Szerkesztés</GroupFoot>
        </Group>

        <Collapse width="10" height="6" viewBox="0 0 10 6" fill="none" stroke="#666" strokeWidth="1.4">
          <path d="M1 5l4-4 4 4" />
        </Collapse>
      </Ribbon>

      <Workspace>
        <ThumbPanel>
          <ThumbRow>
            <ThumbNum $on>1</ThumbNum>
            <ThumbCover $on>Internet szolgáltatásai</ThumbCover>
          </ThumbRow>
          {slides.map((s, i) => (
            <ThumbRow key={i}>
              <ThumbNum>{i + 2}</ThumbNum>
              <Thumb $pl={s.pl} $fs={s.fs}>
                <ThumbTitle $pl={s.tpl} $mb={s.gap}>Az internet kialakulása</ThumbTitle>
                {s.rows.map((r, j) => (
                  <Line key={j} $h={r.h} $in={r.in}>{r.t}</Line>
                ))}
              </Thumb>
            </ThumbRow>
          ))}
        </ThumbPanel>
        <VBar>
          <VBtn><UpTri /></VBtn>
          <VThumb $h={35} />
          <VSpace />
          <VBtn><DownTri /></VBtn>
        </VBar>
        <Editor>
          <EditorMain>
            <RulerTop>
              <TabStopBtn>
                <svg width="7" height="7"><path d="M1 0v6h6" fill="none" stroke="#666" strokeWidth="2" /></svg>
              </TabStopBtn>
              <TopRuler />
            </RulerTop>
            <EditorBody>
              <SideRuler />
              <Canvas>
                <TitleBox>
                  <RotateHandle width="28" height="44" viewBox="0 0 28 44" fill="none" stroke="#999">
                    <path d="M12.500 22v22" strokeWidth="1.500" />
                    <path d="M20 4a10 10 0 1 0 1 15" strokeWidth="1.600" />
                    <path d="M17 8a5.500 5.500 0 1 0 .5 7" strokeWidth="1.600" />
                    <path d="M13 8l14-1-5 8z" fill="#fff" strokeWidth="1.500" />
                  </RotateHandle>
                  <Handle $x={0} $y={0} />
                  <Handle $x={50} $y={0} />
                  <Handle $x={100} $y={0} />
                  <Handle $x={0} $y={50} />
                  <Handle $x={100} $y={50} />
                  <Handle $x={0} $y={100} />
                  <Handle $x={50} $y={100} />
                  <Handle $x={100} $y={100} />
                  <TitleText>Internet szolgál<TextCaret />tatásai</TitleText>
                </TitleBox>
                <SubBox>Alcím beírásához kattintson ide</SubBox>
              </Canvas>
            </EditorBody>
          </EditorMain>
          <RightBar>
            <RBtn><UpTri /></RBtn>
            <RThumb $h={28} />
            <VSpace />
            <RBtn><DownTri /></RBtn>
            <RNav $mt={7}><DoubleTri up /></RNav>
            <RNav $mb={19}><DoubleTri /></RNav>
          </RightBar>
        </Editor>
      </Workspace>

      <Status>
        <StatusText>Dia 1 / 139</StatusText>
        <svg width="16" height="15" viewBox="0 0 16 15" fill="none" stroke="#777">
          <path d="M7 2H1v10h5l1 2M7 2v12" />
          <path d="M9 2h1M9 12h1M10 5l4 6M14 5l-4 6" />
        </svg>
        <StatusRight>
          <StatusBtn>
            <svg width="13" height="12" viewBox="0 0 13 12" stroke="#666" fill="#666"><path d="M6.500 0l3 3h-6z" /><path d="M0 5.500h13M0 8.500h13M0 11.500h13" /></svg>
            Jegyzetek
          </StatusBtn>
          <StatusBtn>
            <svg width="13" height="13" viewBox="0 0 13 13"><path d="M0 0h13v9H6l-2 3V9H0z" fill="#666" /></svg>
            Megjegyzések
          </StatusBtn>
          <ViewBtn $on>
            <svg width="15" height="14" viewBox="0 0 15 14" fill="none" stroke="#666"><rect x=".5" y=".5" width="14" height="13" /><path d="M5 .5v13M8 3.500h4v5H8zM5 11h9" /></svg>
          </ViewBtn>
          <ViewBtn>
            <svg width="15" height="13" viewBox="0 0 15 13" fill="none" stroke="#666"><rect x=".5" y=".5" width="5" height="4" /><rect x="9.500" y=".5" width="5" height="4" /><rect x=".5" y="8.500" width="5" height="4" /><rect x="9.500" y="8.500" width="5" height="4" /></svg>
          </ViewBtn>
          <ViewBtn>
            <svg width="14" height="14" viewBox="0 0 14 14" fill="none" stroke="#666"><path d="M.5 1.500h13v10h-13zM7 1.500v11M2 4h3M2 6h3M2 8h3M9 4h3M9 6h3M9 8h3" /></svg>
          </ViewBtn>
          <ViewBtn>
            <svg width="14" height="14" viewBox="0 0 14 14" fill="none" stroke="#666"><path d="M0 1h14" strokeWidth="2" /><path d="M2 2v6h10V2M7 8v5M4 13.500h6" /></svg>
          </ViewBtn>
          <ZoomMinus width="8" height="3"><rect width="8" height="2" y="1" fill="#666" /></ZoomMinus>
          <Slider><SliderKnob /></Slider>
          <svg width="9" height="9" viewBox="0 0 9 9"><path d="M3.500 0h2v3.500H9v2H5.500V9h-2V5.500H0v-2h3.500z" fill="#666" /></svg>
          <ZoomText>111%</ZoomText>
          <FitIcon width="13" height="13" viewBox="0 0 13 13" fill="none" stroke="#666"><rect x=".5" y=".5" width="12" height="12" /><path d="M6.500 2v3M6.500 8v3M2 6.500h3M8 6.500h3" /></FitIcon>
        </StatusRight>
      </Status>
      <EndLine />
    </Page>
  );
}
